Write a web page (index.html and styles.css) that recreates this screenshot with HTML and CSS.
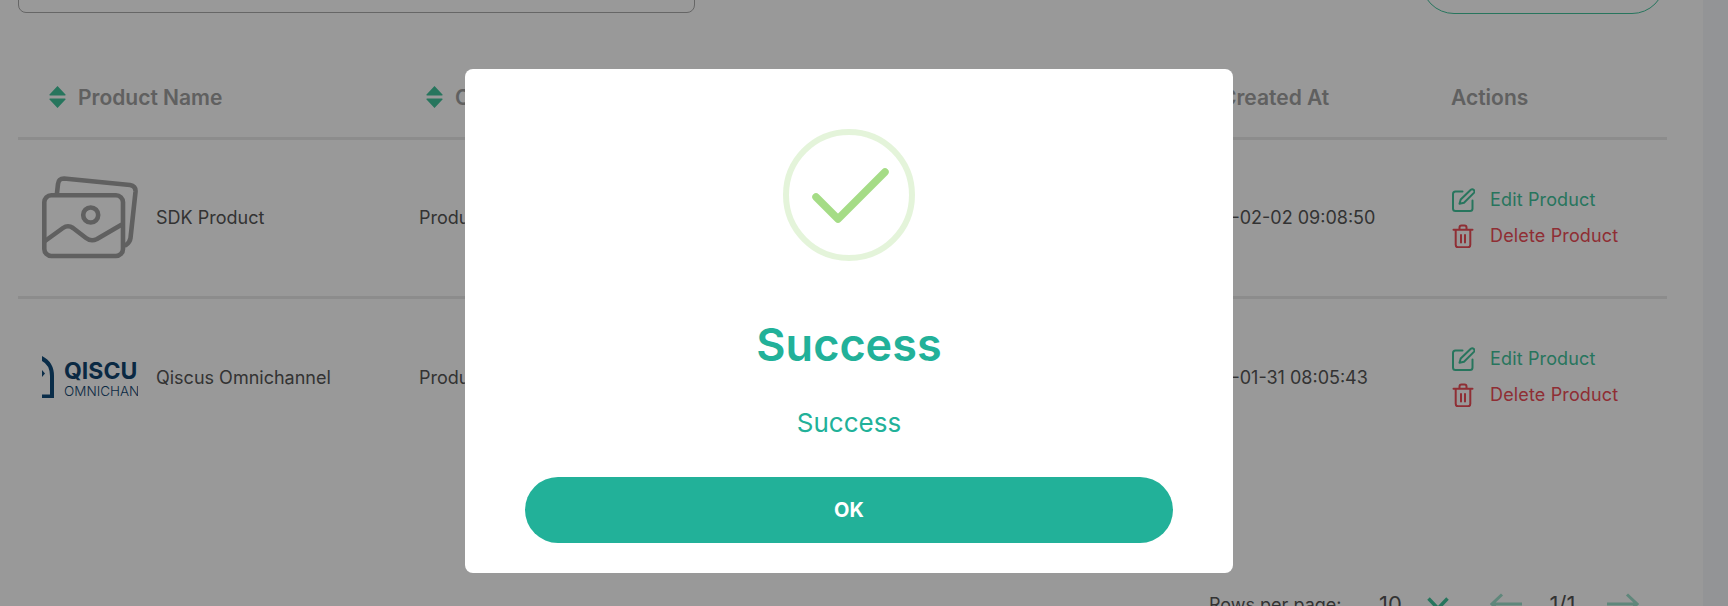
FILE: index.html
```html
<!DOCTYPE html>
<html lang="en">
  <head>
    <meta charset="UTF-8" />
    <meta name="viewport" content="width=device-width, initial-scale=1.0" />
    <title>Products</title>
    <link rel="stylesheet" href="styles.css">
  </head>
  <body>
    <div class="page">
      <main class="content">
        <div class="toolbar">
          <input class="search" type="text" />
          <button class="add-btn" type="button" aria-label="Add Product"></button>
        </div>

        <table class="product-table">
          <thead>
            <tr>
              <th class="col-name">
                <span class="th-inner">
                  <svg class="sort-icon" viewBox="0 0 17 22"><path d="M8.5 0 16.5 8.5a.6.6 0 0 1-.4 1H.9a.6.6 0 0 1-.4-1zM8.5 22 16.5 13.5a.6.6 0 0 0-.4-1H.9a.6.6 0 0 0-.4 1z" /></svg>
                  Product Name
                </span>
              </th>
              <th class="col-category">
                <span class="th-inner">
                  <svg class="sort-icon" viewBox="0 0 17 22"><path d="M8.5 0 16.5 8.5a.6.6 0 0 1-.4 1H.9a.6.6 0 0 1-.4-1zM8.5 22 16.5 13.5a.6.6 0 0 0-.4-1H.9a.6.6 0 0 0-.4 1z" /></svg>
                  Category
                </span>
              </th>
              <th class="col-created">
                <span class="th-inner th-created">
                  <svg class="sort-icon" viewBox="0 0 17 22"><path d="M8.5 0 16.5 8.5a.6.6 0 0 1-.4 1H.9a.6.6 0 0 1-.4-1zM8.5 22 16.5 13.5a.6.6 0 0 0-.4-1H.9a.6.6 0 0 0-.4 1z" /></svg>
                  Created At
                </span>
              </th>
              <th class="col-actions">Actions</th>
            </tr>
          </thead>
          <tbody>
            <tr>
              <td>
                <div class="product-cell">
                  <svg class="thumb" viewBox="0 0 96 84" fill="none" stroke="#a0a0a0" stroke-width="4.600" stroke-linejoin="round" stroke-linecap="round">
                    <path d="M15 17 16 8Q16.500 2.500 22 2.500L88 9Q94 10 93.500 16L88.500 62Q88 66 84 69" />
                    <rect x="2.300" y="19.300" width="78.700" height="60.700" rx="7" />
                    <circle cx="48.700" cy="39" r="7.500" />
                    <path d="M3 65 21 52Q26 48.500 31 52L44 62Q49 66 55 63L79 49" />
                  </svg>
                  <span>SDK Product</span>
                </div>
              </td>
              <td>Product</td>
              <td>2023-02-02 09:08:50</td>
              <td>
                <div class="actions">
                  <a class="action edit">
                    <svg viewBox="0 0 24 24" fill="none" stroke="currentColor" stroke-width="2" stroke-linecap="round" stroke-linejoin="round"><path d="M11.500 3.500H4.500A2.500 2.500 0 0 0 2 6v14.500A2.500 2.500 0 0 0 4.500 23h14.500a2.500 2.500 0 0 0 2.500-2.500v-8" /><path d="M19.800 1.800a2.200 2.200 0 0 1 3.100 3.100L13 14.800l-4.500 1 1.200-4.300z" /></svg>
                    Edit Product
                  </a>
                  <a class="action delete">
                    <svg viewBox="0 0 24 24" fill="none" stroke="currentColor" stroke-width="2" stroke-linecap="round" stroke-linejoin="round"><path d="M2.500 5.800h19M8.500 5.800V3.500a2 2 0 0 1 2-2h3a2 2 0 0 1 2 2v2.300M4.700 5.800v15a2.500 2.500 0 0 0 2.500 2.500h9.600a2.500 2.500 0 0 0 2.500-2.500v-15M10 11v7.500M14 11v7.500" /></svg>
                    Delete Product
                  </a>
                </div>
              </td>
            </tr>
            <tr>
              <td>
                <div class="product-cell">
                  <div class="logo">
                    <svg class="logo-mark" viewBox="0 0 12 42"><path d="M0 0Q12 6 12 20V42H0V38.500H8V20Q8 9 0 5zM0 14 3 17.500 0 21z" /></svg>
                    <div class="logo-text">
                      <span class="logo-title">QISCUS</span>
                      <span class="logo-sub">OMNICHANNEL</span>
                    </div>
                  </div>
                  <span>Qiscus Omnichannel</span>
                </div>
              </td>
              <td>Product</td>
              <td>2023-01-31 08:05:43</td>
              <td>
                <div class="actions">
                  <a class="action edit">
                    <svg viewBox="0 0 24 24" fill="none" stroke="currentColor" stroke-width="2" stroke-linecap="round" stroke-linejoin="round"><path d="M11.500 3.500H4.500A2.500 2.500 0 0 0 2 6v14.500A2.500 2.500 0 0 0 4.500 23h14.500a2.500 2.500 0 0 0 2.500-2.500v-8" /><path d="M19.800 1.800a2.200 2.200 0 0 1 3.100 3.100L13 14.800l-4.500 1 1.200-4.300z" /></svg>
                    Edit Product
                  </a>
                  <a class="action delete">
                    <svg viewBox="0 0 24 24" fill="none" stroke="currentColor" stroke-width="2" stroke-linecap="round" stroke-linejoin="round"><path d="M2.500 5.800h19M8.500 5.800V3.500a2 2 0 0 1 2-2h3a2 2 0 0 1 2 2v2.300M4.700 5.800v15a2.500 2.500 0 0 0 2.500 2.500h9.600a2.500 2.500 0 0 0 2.500-2.500v-15M10 11v7.500M14 11v7.500" /></svg>
                    Delete Product
                  </a>
                </div>
              </td>
            </tr>
          </tbody>
        </table>

        <div class="pagination">
          <span class="rows-label">Rows per page:</span>
          <span class="rows-value">10</span>
          <svg class="chevron" viewBox="0 0 22 14" fill="none" stroke="#42c49c" stroke-width="3.500"><path d="M1.500 1.500 11 11.500 20.500 1.500" /></svg>
          <svg class="arrow dim" viewBox="0 0 32 22" fill="none" stroke="#42c49c" stroke-width="3"><path d="M32 11H2M12 1.500 2 11 12 20.500" /></svg>
          <span class="page-count">1/1</span>
          <svg class="arrow dim" viewBox="0 0 32 22" fill="none" stroke="#42c49c" stroke-width="3"><path d="M0 11H30M20 1.500 30 11 20 20.500" /></svg>
        </div>
      </main>
      <div class="scrollbar"></div>
    </div>

    <div class="overlay">
      <div class="modal">
        <div class="success-icon">
          <svg viewBox="0 0 132 132" fill="none">
            <circle cx="66" cy="66" r="63" stroke="#a5dc86" stroke-opacity="0.3" stroke-width="6" />
            <path d="M33 68 55 90 102 43" stroke="#a5dc86" stroke-width="7.500" stroke-linecap="round" stroke-linejoin="round" />
          </svg>
        </div>
        <h2 class="modal-title">Success</h2>
        <p class="modal-text">Success</p>
        <button class="ok-btn" type="button">OK</button>
      </div>
    </div>
  </body>
</html>
```

FILE: styles.css
```css
* {
  box-sizing: border-box;
}
html,
body {
  height: 100%;
}
body {
  margin: 0;
  overflow: hidden;
  font-family: Inter, Arial, sans-serif;
  background-color: white;
}
.page {
  display: flex;
  height: 606px;
  overflow: hidden;
}
.content {
  flex: 1;
  min-width: 0;
  padding: 0 36px 0 18px;
}
.scrollbar {
  width: 25px;
  background-color: #f6f7fb;
}
.toolbar {
  display: flex;
  justify-content: space-between;
  align-items: flex-end;
  height: 14px;
  padding-right: 2px;
}
.search {
  width: 677px;
  height: 60px;
  margin-bottom: 1px;
  border: 1px solid #aaa;
  border-radius: 8px;
  flex-shrink: 0;
}
.add-btn {
  width: 244px;
  height: 66px;
  border: 1px solid #42c49c;
  border-radius: 33px;
  background-color: white;
  flex-shrink: 0;
}
.product-table {
  width: 1649px;
  table-layout: fixed;
  border-collapse: collapse;
}
.product-table th {
  height: 124px;
  padding: 44px 0 0 24px;
  border-bottom: 3px solid #e9e9e9;
  color: #a0a0a0;
  font-size: 21px;
  font-weight: 600;
  text-align: left;
  white-space: nowrap;
}
.product-table td {
  height: 159px;
  padding: 0 0 0 24px;
  border-bottom: 3px solid #e9e9e9;
  color: #555;
  font-size: 18px;
  white-space: nowrap;
}
.product-table tbody tr:last-child td {
  border-bottom: none;
}
.col-name {
  width: 377px;
}
.col-category {
  width: 768px;
}
.col-created {
  width: 264px;
}
.col-actions {
  width: 240px;
}
.th-inner {
  display: flex;
  align-items: center;
  gap: 12px;
  margin-left: 7px;
}
.th-created {
  margin-left: 5px;
}
.sort-icon {
  width: 17px;
  height: 22px;
  fill: #42c49c;
}
.product-cell {
  display: flex;
  align-items: center;
  gap: 18px;
}
.thumb {
  width: 96px;
  height: 84px;
}
.logo {
  display: flex;
  width: 96px;
  height: 42px;
  gap: 10px;
  overflow: hidden;
  flex-shrink: 0;
}
.logo-mark {
  width: 12px;
  height: 42px;
  fill: #114b7b;
  flex-shrink: 0;
}
.logo-text {
  display: flex;
  flex-direction: column;
  padding-top: 2px;
  color: #114570;
}
.logo-title {
  font-size: 23px;
  font-weight: 700;
  line-height: 27px;
}
.logo-sub {
  font-size: 13.500px;
  font-weight: 300;
  line-height: 13px;
}
.actions {
  display: flex;
  flex-direction: column;
  gap: 12px;
}
.action {
  display: flex;
  align-items: center;
  gap: 15px;
  font-size: 18px;
  letter-spacing: 0.15px;
  line-height: 24px;
}
.action svg {
  width: 24px;
  height: 24px;
}
.edit {
  color: #42c49c;
}
.delete {
  color: #ee4d57;
}
.pagination {
  display: flex;
  align-items: center;
  height: 28px;
  margin-top: 134px;
  padding-left: 1191px;
  color: #555;
  white-space: nowrap;
}
.rows-label {
  width: 170px;
  font-size: 18px;
}
.rows-value {
  width: 48px;
  font-size: 22px;
}
.chevron {
  width: 22px;
  height: 14px;
  margin-right: 41px;
}
.arrow {
  width: 32px;
  height: 22px;
}
.dim {
  opacity: 0.5;
}
.page-count {
  width: 85px;
  padding-right: 4px;
  font-size: 22px;
  text-align: center;
}
.overlay {
  position: fixed;
  inset: 0;
  display: flex;
  justify-content: center;
  padding-top: 69px;
  padding-right: 30px;
  background-color: rgba(0, 0, 0, 0.4);
}
.modal {
  width: 768px;
  height: 504px;
  padding: 60px 60px 30px;
  background-color: white;
  border-radius: 8px;
  text-align: center;
}
.success-icon {
  display: flex;
  justify-content: center;
  height: 132px;
}
.success-icon svg {
  width: 132px;
  height: 132px;
}
.modal-title {
  margin: 57px 0 0;
  color: #22b199;
  font-size: 45px;
  font-weight: 600;
  line-height: 54px;
}
.modal-text {
  margin: 36px 0 0;
  color: #22b199;
  font-size: 26px;
  line-height: 30px;
}
.ok-btn {
  display: block;
  width: 648px;
  height: 66px;
  margin-top: 39px;
  border: none;
  border-radius: 33px;
  background-color: #22b199;
  color: white;
  font-family: inherit;
  font-size: 20px;
  font-weight: 700;
}
```
